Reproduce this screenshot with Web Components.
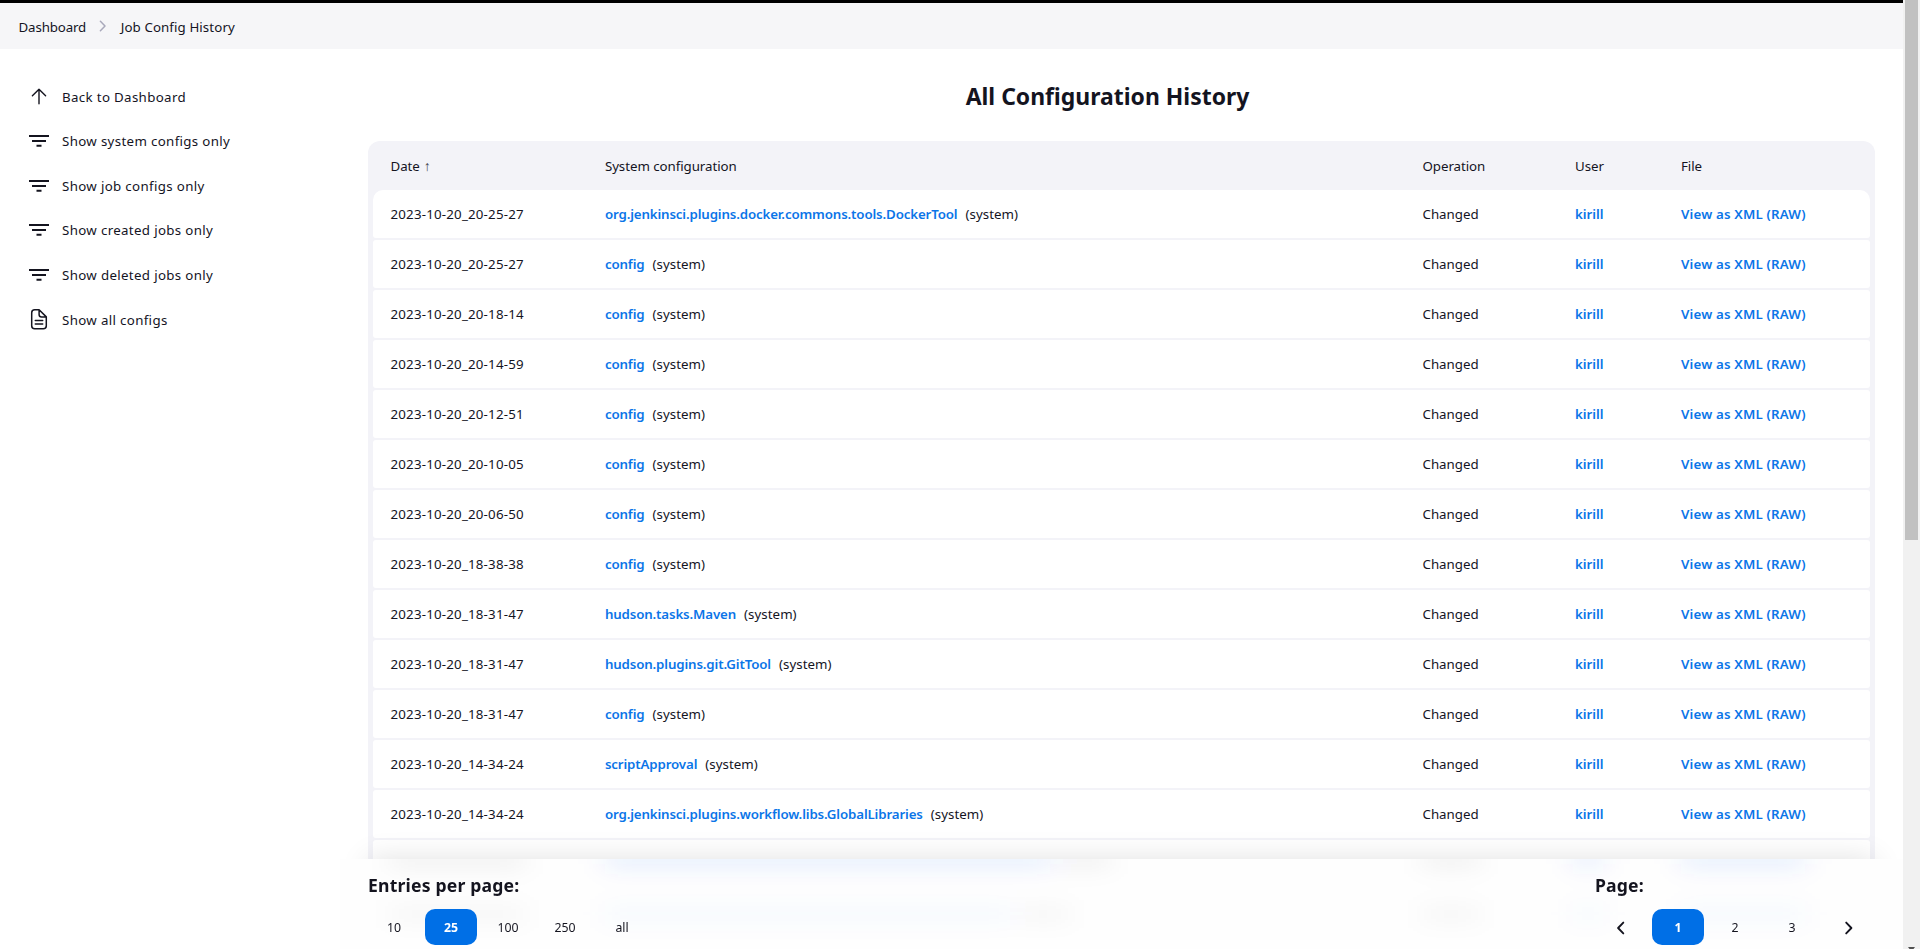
<!DOCTYPE html>
<html lang="en">
<head>
<meta charset="utf-8">
<title>Job Config History</title>
<style>
  html, body { margin: 0; height: 100%; overflow: hidden; background: #fff; }
  body { font: 400 13.3px/20px "Noto Sans", "Open Sans", sans-serif; color: #14141f; }
</style>
</head>
<body>
<jch-app></jch-app>
<script>
const define = (name, html, setup) => customElements.define(name, class extends HTMLElement {
  connectedCallback() {
    if (this.shadowRoot) return;
    const root = this.attachShadow({ mode: 'open' });
    root.innerHTML = html;
    if (setup) setup(this, root);
  }
});

const ICONS = {
  up: '<path d="M15 21.800V7.300M8.400 13.800L15 7.200l6.600 6.600" fill="none" stroke="currentColor" stroke-width="1.400" stroke-linecap="round" stroke-linejoin="round"/>',
  filter: '<path d="M5 10h20M8 15h14M12.500 19.700h5" fill="none" stroke="currentColor" stroke-width="2"/>',
  doc: '<path d="M22.300 12.700v8.800a3 3 0 0 1-3 3H10.700a3 3 0 0 1-3-3V8.500a3 3 0 0 1 3-3h4.400zM15.100 5.500v4.700a2.500 2.500 0 0 0 2.500 2.500h4.700M11.300 16.200h7.400M11.300 19.800h7.400" transform="translate(0,-.8)" fill="none" stroke="currentColor" stroke-width="1.500" stroke-linecap="round" stroke-linejoin="round"/>',
  prev: '<path d="M17.300 9.600L12.100 15l5.200 5.400" fill="none" stroke="currentColor" stroke-width="1.900" stroke-linecap="round" stroke-linejoin="round"/>',
  next: '<path d="M12.200 9.600L17.400 15l-5.200 5.400" fill="none" stroke="currentColor" stroke-width="1.900" stroke-linecap="round" stroke-linejoin="round"/>',
  crumb: '<path d="M12.400 11.200L17 16l-4.600 4.800" fill="none" stroke="#a9a9bb" stroke-width="1.500" stroke-linecap="round" stroke-linejoin="round"/>'
};

define('jch-icon', `<style>:host{display:block;width:30px;height:30px;flex:none}svg{display:block}</style>
<svg width="30" height="30" viewBox="0 0 30 30"></svg>`,
  (el, r) => { r.querySelector('svg').innerHTML = ICONS[el.getAttribute('name')]; });

define('jch-breadcrumbs', `<style>
:host{display:flex;align-items:center;height:46px;border-top:3px solid #000;background:#f6f6f8;padding-left:18.500px;box-sizing:content-box}
span{letter-spacing:.1px;padding-top:2px}
span:first-of-type{letter-spacing:-.13px}
jch-icon{margin:0 2.500px 2px 2px}
</style><span>Dashboard</span><jch-icon name="crumb"></jch-icon><span>Job Config History</span>`);

define('jch-task', `<style>
:host{display:flex;align-items:center;height:44.6px;letter-spacing:.34px}
jch-icon{margin:0 8px 0 24px}
</style><jch-icon></jch-icon><slot></slot>`,
  (el, r) => {
    const i = document.createElement('jch-icon');
    i.setAttribute('name', el.getAttribute('icon'));
    r.querySelector('jch-icon').replaceWith(i);
  });

define('jch-sidebar', `<style>:host{display:block;padding-top:25.400px}</style>
<jch-task icon="up">Back to Dashboard</jch-task>
<jch-task icon="filter">Show system configs only</jch-task>
<jch-task icon="filter">Show job configs only</jch-task>
<jch-task icon="filter">Show created jobs only</jch-task>
<jch-task icon="filter">Show deleted jobs only</jch-task>
<jch-task icon="doc">Show all configs</jch-task>`);

define('jch-row', `<style>
:host{display:grid;grid-template-columns:214.400px 817.600px 152.500px 106px 1fr;align-items:center;height:48px;box-sizing:border-box;padding-left:17.500px;background:#fff;border-radius:3px}
:host([first]){border-radius:10px 10px 3px 3px}
a{color:#0b75e8;font-weight:600}
.name{letter-spacing:-.14px}
.date{letter-spacing:.2px}
.file{letter-spacing:.17px}
.kind{margin-left:8px;letter-spacing:.05px}
</style>
<span class="date"></span><span><a class="name"></a><span class="kind">(system)</span></span><span>Changed</span><a>kirill</a><a class="file">View as XML (RAW)</a>`,
  (el, r) => {
    if (!el.hasAttribute('name')) {
      r.querySelectorAll('span, a').forEach(n => n.remove());
      return;
    }
    r.querySelector('.date').textContent = el.getAttribute('date');
    r.querySelector('.name').textContent = el.getAttribute('name');
  });

const ENTRIES = [
  ['2023-10-20_20-25-27', 'org.jenkinsci.plugins.docker.commons.tools.DockerTool'],
  ['2023-10-20_20-25-27', 'config'],
  ['2023-10-20_20-18-14', 'config'],
  ['2023-10-20_20-14-59', 'config'],
  ['2023-10-20_20-12-51', 'config'],
  ['2023-10-20_20-10-05', 'config'],
  ['2023-10-20_20-06-50', 'config'],
  ['2023-10-20_18-38-38', 'config'],
  ['2023-10-20_18-31-47', 'hudson.tasks.Maven'],
  ['2023-10-20_18-31-47', 'hudson.plugins.git.GitTool'],
  ['2023-10-20_18-31-47', 'config'],
  ['2023-10-20_14-34-24', 'scriptApproval'],
  ['2023-10-20_14-34-24', 'org.jenkinsci.plugins.workflow.libs.GlobalLibraries'],
  [],
  []
];

define('jch-table', `<style>
:host{display:block;background:#f3f3f8;border-radius:12px 12px 0 0;padding:0 5px}
.head{display:grid;grid-template-columns:214.400px 817.600px 152.500px 106px 1fr;align-items:center;height:49px;padding-left:17.500px;letter-spacing:-.05px}
i{font-style:normal;font-family:"Liberation Sans",sans-serif;font-size:14px;line-height:1;color:#44444e;margin-left:4px}
.rows{display:flex;flex-direction:column;gap:2px}
</style>
<div class="head"><span>Date<i>↑</i></span><span>System configuration</span><span>Operation</span><span>User</span><span>File</span></div>
<div class="rows"></div>`,
  (el, r) => {
    const rows = r.querySelector('.rows');
    ENTRIES.forEach(([date, name], n) => {
      const row = document.createElement('jch-row');
      if (name) {
        row.setAttribute('date', date);
        row.setAttribute('name', name);
      }
      if (!n) row.setAttribute('first', '');
      rows.append(row);
    });
  });

define('jch-page-button', `<style>
:host{display:flex;align-items:center;justify-content:center;width:52px;height:36px;border-radius:10px;font-size:12.300px}
:host([active]){background:#006fe6;color:#fff;font-weight:700}
span{padding-top:1px}
</style><span><slot></slot></span>`);

define('jch-pager', `<style>
:host{display:block}
h2{margin:0;font:700 17.600px/24px "Noto Sans",sans-serif;letter-spacing:.18px}
.buttons{display:flex;gap:5px;margin-top:12px}
</style><h2><slot name="label"></slot></h2><div class="buttons"><slot></slot></div>`);

/* Frosted bar over the lower rows; its shadow is cast upwards only. */
define('jch-footer', `<style>
:host{position:absolute;left:368px;right:28px;bottom:0;height:90px;display:flex;justify-content:space-between;align-items:flex-start;padding-top:14px;box-sizing:border-box}
.shadow{position:absolute;inset:0;box-shadow:0 0 30px rgba(0,0,0,.12);clip-path:inset(-40px -28px 100% -28px)}
.glass{position:absolute;inset:0 -28px;background:#fefefe;overflow:hidden}
.glass svg{display:block}
jch-pager{position:relative}
</style>
<div class="shadow"></div>
<div class="glass"><svg width="1563" height="90"><defs><filter id="frost" x="-20" y="-60" width="1620" height="200" filterUnits="userSpaceOnUse"><feGaussianBlur stdDeviation="14 11"/></filter></defs>
<g filter="url(#frost)"><g fill="#222" opacity=".065"><rect x="50" y="-6" width="135" height="14"/><rect x="718" y="-6" width="52" height="14"/><rect x="1082" y="-6" width="58" height="14"/></g>
<g fill="#1c5cff" opacity=".11"><rect x="265" y="-8" width="445" height="16"/><rect x="1233" y="-8" width="30" height="16"/><rect x="1341" y="-8" width="124" height="16"/></g>
<g fill="#222" opacity=".04"><rect x="50" y="48" width="135" height="14"/><rect x="678" y="48" width="52" height="14"/><rect x="1082" y="48" width="58" height="14"/></g>
<g fill="#1c8cff" opacity=".045"><rect x="265" y="47" width="405" height="15"/><rect x="1233" y="47" width="30" height="15"/><rect x="1341" y="47" width="124" height="15"/></g></g></svg></div>
<jch-pager><span slot="label">Entries per page:</span>
<jch-page-button>10</jch-page-button><jch-page-button active>25</jch-page-button><jch-page-button>100</jch-page-button><jch-page-button>250</jch-page-button><jch-page-button>all</jch-page-button></jch-pager>
<jch-pager><span slot="label">Page:</span>
<jch-page-button><jch-icon name="prev"></jch-icon></jch-page-button><jch-page-button active>1</jch-page-button><jch-page-button>2</jch-page-button><jch-page-button>3</jch-page-button><jch-page-button><jch-icon name="next"></jch-icon></jch-page-button></jch-pager>`);

define('jch-scrollbar', `<style>
:host{display:flex;flex-direction:column;justify-content:space-between;align-items:center;background:#f1f1f1}
.thumb{width:13px;height:540px;background:#c1c1c1}
svg{display:block}
</style><div class="thumb"></div><svg width="7" height="2"><path d="M0 0h7L5.500 2h-4z" fill="#505050"/></svg>`);

define('jch-app', `<style>
:host{display:grid;grid-template-columns:1fr 17px;height:949px;overflow:hidden}
.page{position:relative;height:949px;overflow:hidden}
.body{display:grid;grid-template-columns:368px 1fr;padding-right:28px}
h1{margin:0;padding:31px 28px 29px 0;font:700 22.950px/32px "Noto Sans",sans-serif;text-align:center}
</style>
<div class="page">
<jch-breadcrumbs></jch-breadcrumbs>
<div class="body"><jch-sidebar></jch-sidebar><main><h1>All Configuration History</h1><jch-table></jch-table></main></div>
<jch-footer></jch-footer>
</div>
<jch-scrollbar></jch-scrollbar>`);
</script>
</body>
</html>
